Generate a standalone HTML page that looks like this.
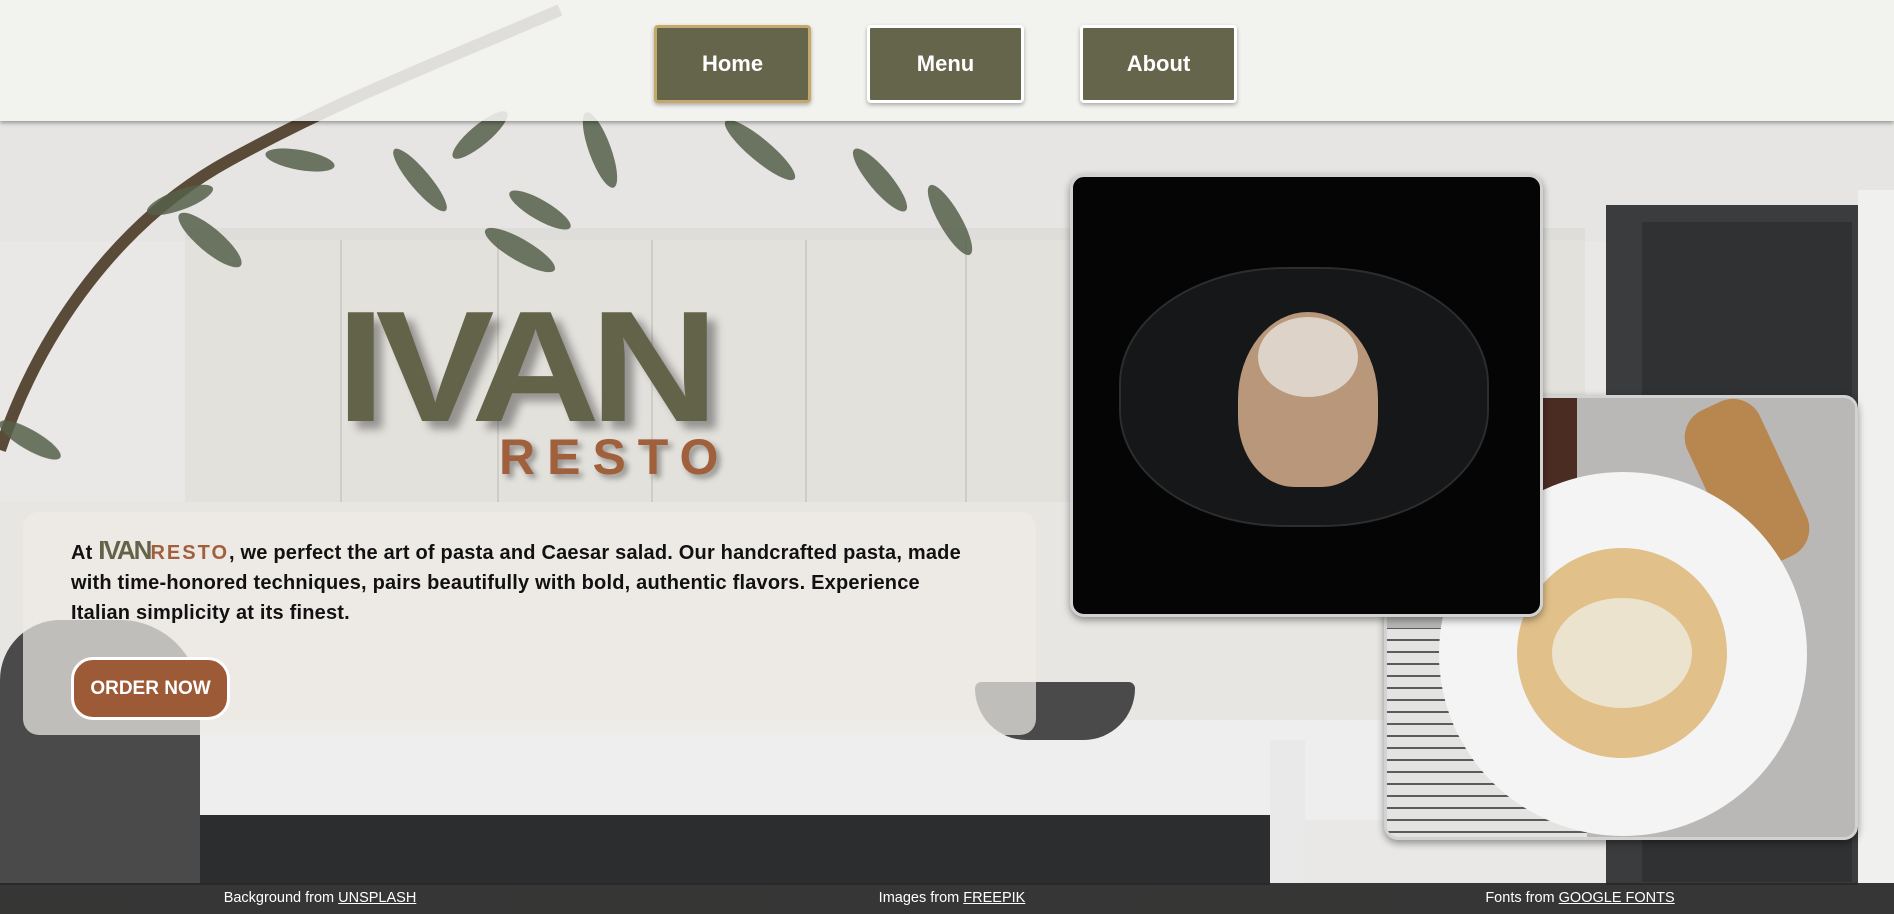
<!DOCTYPE html>
<html><head><meta charset="utf-8"><style>
*{margin:0;padding:0;box-sizing:border-box}
body{width:1894px;height:914px;overflow:hidden;position:relative;font-family:"Liberation Sans",sans-serif;background:#e9e8e6}
.abs{position:absolute}
.nav{left:0;top:0;width:1894px;height:121px;background:rgba(243,242,240,.88);box-shadow:0 2px 4px rgba(0,0,0,.35)}
.btn{position:absolute;top:25px;height:78px;width:157px;background:#65654b;color:#fff;font-weight:bold;font-size:22px;display:flex;align-items:center;justify-content:center;border:3px solid #fff;border-radius:4px;box-shadow:0 2px 4px rgba(0,0,0,.3)}
.ivan{left:336px;top:267px;font-size:158px;font-weight:bold;color:#636349;letter-spacing:-9px;line-height:200px;text-shadow:8px 8px 8px rgba(0,0,0,.35);transform:scaleX(1.13);transform-origin:left top}
.resto{left:499px;top:428px;font-size:50px;font-weight:bold;color:#a0603b;letter-spacing:12px;text-shadow:4px 4px 6px rgba(0,0,0,.35)}
.box{left:23px;top:512px;width:1013px;height:223px;background:rgba(238,236,232,.72);border-radius:16px}
.p{left:71px;top:535px;width:910px;font-size:20px;font-weight:bold;color:#111;line-height:30px;letter-spacing:.2px}
.order{left:71px;top:657px;width:159px;height:63px;background:#9d5a36;border:3px solid #fff;border-radius:22px;color:#fff;font-weight:bold;font-size:19px;display:flex;align-items:center;justify-content:center}
.img{border:3px solid #d2d2d2;border-radius:14px;overflow:hidden;box-shadow:0 3px 8px rgba(0,0,0,.4)}
.foot{left:0;top:883px;width:1894px;height:31px;background:rgba(40,40,40,.93);color:#fff;font-size:14.5px}
.foot span{position:absolute;top:7px;transform:translateX(-50%);white-space:nowrap}
.foot u{text-decoration:underline}
</style></head><body>
<div class="abs" style="left:0;top:121px;width:1894px;height:120px;background:#e6e5e4"></div>
<div class="abs" style="left:185px;top:228px;width:1400px;height:12px;background:#deddda"></div>
<div class="abs" style="left:185px;top:240px;width:1400px;height:262px;background:#e3e1dc"></div>
<div class="abs" style="left:340px;top:240px;width:2px;height:262px;background:#cfcdc8"></div>
<div class="abs" style="left:497px;top:240px;width:2px;height:262px;background:#cfcdc8"></div>
<div class="abs" style="left:651px;top:240px;width:2px;height:262px;background:#cfcdc8"></div>
<div class="abs" style="left:805px;top:240px;width:2px;height:262px;background:#cfcdc8"></div>
<div class="abs" style="left:965px;top:240px;width:2px;height:262px;background:#cfcdc8"></div>
<div class="abs" style="left:0;top:502px;width:1894px;height:230px;background:#e8e6e2"></div>
<div class="abs" style="left:1606px;top:205px;width:252px;height:680px;background:#3a3c3e"></div>
<div class="abs" style="left:1642px;top:222px;width:210px;height:660px;background:#2f3133"></div>
<div class="abs" style="left:1858px;top:190px;width:36px;height:700px;background:#f0f0ef"></div>
<div class="abs" style="left:100px;top:720px;width:1290px;height:100px;background:#eeeeee"></div>
<div class="abs" style="left:180px;top:815px;width:1090px;height:70px;background:#2c2d2f"></div>
<div class="abs" style="left:1270px;top:740px;width:35px;height:145px;background:#e9e9e9"></div>
<div class="abs" style="left:0;top:620px;width:200px;height:265px;background:#4a4a4a;border-radius:60px 80px 0 0"></div>
<div class="abs" style="left:975px;top:682px;width:160px;height:58px;background:#4a4a4a;border-radius:10px 10px 80px 80px"></div>
<svg class="abs" style="left:0;top:0" width="1000" height="520">
<path d="M0 450 C40 330 120 220 230 160 S420 70 560 10" stroke="#5a4a38" stroke-width="12" fill="none"/>
<g fill="#56604a" opacity=".85">
<ellipse cx="210" cy="240" rx="40" ry="12" transform="rotate(40 210 240)"/>
<ellipse cx="180" cy="200" rx="35" ry="10" transform="rotate(-20 180 200)"/>
<ellipse cx="300" cy="160" rx="35" ry="10" transform="rotate(10 300 160)"/>
<ellipse cx="420" cy="180" rx="40" ry="10" transform="rotate(50 420 180)"/>
<ellipse cx="540" cy="210" rx="35" ry="10" transform="rotate(30 540 210)"/>
<ellipse cx="600" cy="150" rx="40" ry="11" transform="rotate(70 600 150)"/>
<ellipse cx="760" cy="150" rx="45" ry="11" transform="rotate(40 760 150)"/>
<ellipse cx="950" cy="220" rx="40" ry="11" transform="rotate(60 950 220)"/>
<ellipse cx="480" cy="135" rx="35" ry="10" transform="rotate(-40 480 135)"/>
<ellipse cx="30" cy="440" rx="35" ry="10" transform="rotate(30 30 440)"/>
<ellipse cx="880" cy="180" rx="40" ry="11" transform="rotate(50 880 180)"/>
<ellipse cx="520" cy="250" rx="40" ry="11" transform="rotate(30 520 250)"/>
</g></svg>
<div class="abs nav"></div>
<div class="btn" style="left:654px;border-color:#c4a96b">Home</div>
<div class="btn" style="left:867px">Menu</div>
<div class="btn" style="left:1080px">About</div>
<div class="abs ivan">IVAN</div>
<div class="abs resto">RESTO</div>
<div class="abs box"></div>
<div class="abs p">At <span style="color:#636349;font-size:26px;letter-spacing:-2px">IVAN</span><span style="color:#a0603b;letter-spacing:2px">RESTO</span>, we perfect the art of pasta and Caesar salad. Our handcrafted pasta, made with time-honored techniques, pairs beautifully with bold, authentic flavors. Experience Italian simplicity at its finest.</div>
<div class="abs order">ORDER NOW</div>
<div class="abs img" style="left:1384px;top:395px;width:474px;height:445px;background:#b9b8b6">
<div class="abs" style="left:0;top:0;width:190px;height:120px;background:#4a2c22"></div>
<div class="abs" style="left:0;top:230px;width:200px;height:215px;background:repeating-linear-gradient(0deg,#eee 0 10px,#444 10px 12px),#eee;opacity:.8"></div>
<div class="abs" style="left:320px;top:0;width:80px;height:170px;background:#b8864f;border-radius:30px;transform:rotate(-25deg)"></div>
<div class="abs" style="left:52px;top:74px;width:368px;height:364px;background:#f4f4f4;border-radius:50%"></div>
<div class="abs" style="left:130px;top:150px;width:210px;height:210px;background:#e1c08a;border-radius:50%"></div>
<div class="abs" style="left:165px;top:200px;width:140px;height:110px;background:#ece3cf;border-radius:50%"></div>
</div>
<div class="abs img" style="left:1070px;top:174px;width:473px;height:443px;background:#050505">
<div class="abs" style="left:46px;top:90px;width:370px;height:260px;background:#151719;border-radius:45%;border:2px solid #2b2d2f"></div>
<div class="abs" style="left:165px;top:135px;width:140px;height:175px;background:#b8977a;border-radius:50% 50% 40% 40%"></div>
<div class="abs" style="left:185px;top:140px;width:100px;height:80px;background:#ddd3c8;border-radius:50%"></div>
</div>
<div class="abs foot">
<span style="left:320px">Background from <u>UNSPLASH</u></span>
<span style="left:952px">Images from <u>FREEPIK</u></span>
<span style="left:1580px">Fonts from <u>GOOGLE FONTS</u></span>
</div>
</body></html>
